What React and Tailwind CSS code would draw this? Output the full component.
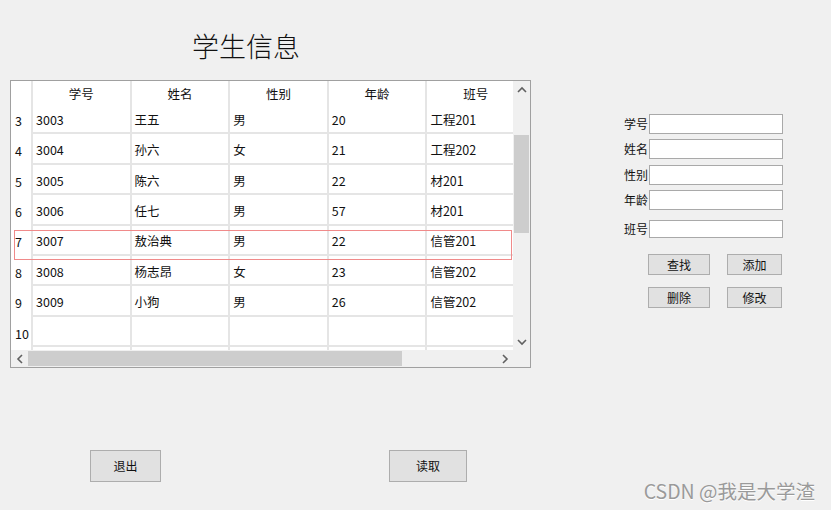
import React from 'react';

const rows = [
  { n: '3', id: '3003', name: '王五', sex: '男', age: '20', cls: '工程201' },
  { n: '4', id: '3004', name: '孙六', sex: '女', age: '21', cls: '工程202' },
  { n: '5', id: '3005', name: '陈六', sex: '男', age: '22', cls: '材201' },
  { n: '6', id: '3006', name: '任七', sex: '男', age: '57', cls: '材201' },
  { n: '7', id: '3007', name: '敖治典', sex: '男', age: '22', cls: '信管201' },
  { n: '8', id: '3008', name: '杨志昂', sex: '女', age: '23', cls: '信管202' },
  { n: '9', id: '3009', name: '小狗', sex: '男', age: '26', cls: '信管202' },
  { n: '10', id: '', name: '', sex: '', age: '', cls: '' },
  { n: '', id: '', name: '', sex: '', age: '', cls: '' },
];

const headers = ['学号', '姓名', '性别', '年龄', '班号'];

const Chevron = ({ dir }) => {
  const d = {
    up: 'M1 6 L5 2 L9 6',
    down: 'M1 2 L5 6 L9 2',
    left: 'M6 1 L2 5 L6 9',
    right: 'M2 1 L6 5 L2 9',
  }[dir];
  const vertical = dir === 'up' || dir === 'down';
  return (
    <svg width={vertical ? 10 : 8} height={vertical ? 8 : 10} viewBox={vertical ? '0 0 10 8' : '0 0 8 10'}>
      <path d={d} fill="none" stroke="#606060" strokeWidth="1.6" />
    </svg>
  );
};

const Cell = ({ children }) => (
  <div className="w-[98.6px] shrink-0 h-full border-r-2 border-b-2 border-[#e5e5e5] pl-[3px] pt-[4px] flex items-center">
    {children}
  </div>
);

const StudentTable = () => (
  <div className="w-[521px] h-[288px] border border-[#a0a0a0] bg-white grid grid-cols-[502px_17px] grid-rows-[269px_17px] text-[12.5px] text-[#111]">
    <div className="relative overflow-hidden">
      <div className="flex h-[23px] w-max">
        <div className="w-[22px] shrink-0 border-r-2 border-[#e5e5e5]"></div>
        {headers.map((h) => (
          <div key={h} className="w-[98.6px] shrink-0 border-r-2 border-[#e5e5e5] pt-[3px] flex items-center justify-center">
            {h}
          </div>
        ))}
      </div>
      {rows.map((r, i) => (
        <div key={i} className="flex h-[30.4px] w-max">
          <div className="w-[22px] shrink-0 border-r-2 border-[#e5e5e5] pl-[4px] pt-[4px] flex items-center">{r.n}</div>
          <Cell>{r.id}</Cell>
          <Cell>{r.name}</Cell>
          <Cell>{r.sex}</Cell>
          <Cell>{r.age}</Cell>
          <Cell>{r.cls}</Cell>
        </div>
      ))}
      <div className="absolute left-[3px] top-[149px] w-[498px] h-[30px] border border-[#f08a8a]"></div>
    </div>

    <div className="bg-[#f0f0f0] flex flex-col">
      <div className="h-[17px] flex items-center justify-center">
        <Chevron dir="up" />
      </div>
      <div className="flex-1 pt-[37px] px-[1px]">
        <div className="h-[98px] bg-[#cdcdcd]"></div>
      </div>
      <div className="h-[17px] flex items-center justify-center">
        <Chevron dir="down" />
      </div>
    </div>

    <div className="bg-[#f0f0f0] flex">
      <div className="w-[17px] flex items-center justify-center">
        <Chevron dir="left" />
      </div>
      <div className="flex-1 py-[1px]">
        <div className="w-[374px] h-full bg-[#cdcdcd]"></div>
      </div>
      <div className="w-[17px] flex items-center justify-center">
        <Chevron dir="right" />
      </div>
    </div>
    <div className="bg-[#f0f0f0]"></div>
  </div>
);

const Field = ({ label, className = 'h-[20px]', mt }) => (
  <div className={`flex items-center ${mt}`}>
    <span className="w-[25px] text-[12px] leading-none">{label}</span>
    <input className={`w-[134px] ${className} bg-white border border-[#a9a9a9] outline-none`} />
  </div>
);

const Btn = ({ children, className }) => (
  <button className={`bg-[#e1e1e1] border border-[#adadad] text-[12px] text-[#111] flex items-center justify-center ${className}`}>
    {children}
  </button>
);

export default function App() {
  return (
    <div className="w-[831px] h-[510px] bg-[#f0f0f0] relative overflow-hidden font-['Noto_Sans_CJK_SC',sans-serif] text-[#111]">
      <div className="flex h-[367px]">
        <div className="pl-[10px] w-[540px] shrink-0">
          <div className="h-[80px] pl-[182px] pt-[30px]">
            <h1 className="text-[27px] leading-[36px] font-['Liberation_Serif','Noto_Sans_CJK_SC',serif] font-light">
              学生信息
            </h1>
          </div>
          <StudentTable />
        </div>

        <div className="pt-[114px] pl-[84px]">
          <Field label="学号" mt="" />
          <Field label="姓名" mt="mt-[5px]" />
          <Field label="性别" mt="mt-[6px]" />
          <Field label="年龄" mt="mt-[5px]" />
          <Field label="班号" mt="mt-[10px]" className="h-[18px]" />
          <div className="flex gap-[17px] pl-[24px] mt-[16px]">
            <Btn className="w-[62px] h-[21px]">查找</Btn>
            <Btn className="w-[55px] h-[21px]">添加</Btn>
          </div>
          <div className="flex gap-[17px] pl-[24px] mt-[12px]">
            <Btn className="w-[62px] h-[21px]">删除</Btn>
            <Btn className="w-[55px] h-[21px]">修改</Btn>
          </div>
        </div>
      </div>

      <div className="flex pt-[83px] pl-[90px]">
        <Btn className="w-[71px] h-[32px]">退出</Btn>
        <Btn className="w-[78px] h-[32px] ml-[228px]">读取</Btn>
      </div>

      <div className="absolute right-[16px] top-[476px] text-[19.5px] text-[#9a9a9a] [text-shadow:0_1px_0_#ffffff]">
        CSDN @我是大学渣
      </div>
    </div>
  );
}
